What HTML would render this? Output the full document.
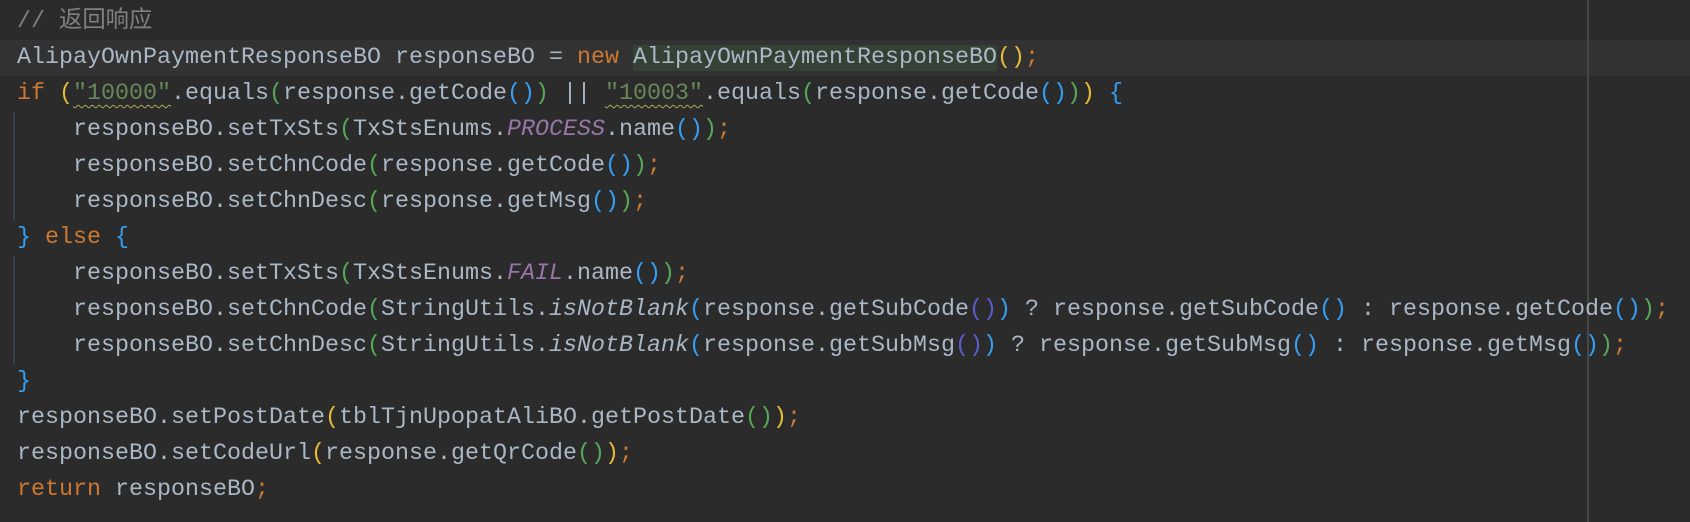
<!DOCTYPE html>
<html><head><meta charset="utf-8"><style>
html,body{margin:0;padding:0;}
body{width:1690px;height:522px;background:#2b2b2b;position:relative;overflow:hidden;
font-family:"Liberation Mono","Noto Sans CJK SC",monospace;font-size:23.33px;color:#a9b7c6;}
.l{position:absolute;left:17px;height:36px;line-height:36px;white-space:pre;}
.hl{position:absolute;left:0;width:1690px;top:40px;height:36px;background:#323232;}
.vg{position:absolute;left:1587px;top:0;width:2px;height:522px;background:#474747;}
.ig{position:absolute;left:13px;width:2px;background:#34414d;}
.k{color:#cc7832}.s{color:#6a8759;text-decoration:underline wavy #a9a95a;text-underline-offset:5px;text-decoration-thickness:1px}
.c{color:#808080}.p{color:#9876aa;font-style:italic}.i{font-style:italic}
.y{color:#e8ba36}.g{color:#54a857}.b{color:#359ff4}.n{color:#5c5ccc}
.gh{background:#344134}
</style></head><body>
<div class="hl"></div>
<div class="vg"></div>
<div class="ig" style="top:112px;height:108px"></div>
<div class="ig" style="top:256px;height:108px"></div>
<div class="l c" style="top:4px">// 返回响应</div>
<div class="l" style="top:40px">AlipayOwnPaymentResponseBO responseBO = <span class="k">new</span> <span class="gh">AlipayOwnPaymentResponseBO</span><span class="y">()</span><span class="k">;</span></div>
<div class="l" style="top:76px"><span class="k">if</span> <span class="y">(</span><span class="s">"10000"</span>.equals<span class="g">(</span>response.getCode<span class="b">()</span><span class="g">)</span> || <span class="s">"10003"</span>.equals<span class="g">(</span>response.getCode<span class="b">()</span><span class="g">)</span><span class="y">)</span> <span class="b">{</span></div>
<div class="l" style="top:112px">    responseBO.setTxSts<span class="g">(</span>TxStsEnums.<span class="p">PROCESS</span>.name<span class="b">()</span><span class="g">)</span><span class="k">;</span></div>
<div class="l" style="top:148px">    responseBO.setChnCode<span class="g">(</span>response.getCode<span class="b">()</span><span class="g">)</span><span class="k">;</span></div>
<div class="l" style="top:184px">    responseBO.setChnDesc<span class="g">(</span>response.getMsg<span class="b">()</span><span class="g">)</span><span class="k">;</span></div>
<div class="l" style="top:220px"><span class="b">}</span> <span class="k">else</span> <span class="b">{</span></div>
<div class="l" style="top:256px">    responseBO.setTxSts<span class="g">(</span>TxStsEnums.<span class="p">FAIL</span>.name<span class="b">()</span><span class="g">)</span><span class="k">;</span></div>
<div class="l" style="top:292px">    responseBO.setChnCode<span class="g">(</span>StringUtils.<span class="i">isNotBlank</span><span class="b">(</span>response.getSubCode<span class="n">()</span><span class="b">)</span> ? response.getSubCode<span class="b">()</span> : response.getCode<span class="b">()</span><span class="g">)</span><span class="k">;</span></div>
<div class="l" style="top:328px">    responseBO.setChnDesc<span class="g">(</span>StringUtils.<span class="i">isNotBlank</span><span class="b">(</span>response.getSubMsg<span class="n">()</span><span class="b">)</span> ? response.getSubMsg<span class="b">()</span> : response.getMsg<span class="b">()</span><span class="g">)</span><span class="k">;</span></div>
<div class="l" style="top:364px"><span class="b">}</span></div>
<div class="l" style="top:400px">responseBO.setPostDate<span class="y">(</span>tblTjnUpopatAliBO.getPostDate<span class="g">()</span><span class="y">)</span><span class="k">;</span></div>
<div class="l" style="top:436px">responseBO.setCodeUrl<span class="y">(</span>response.getQrCode<span class="g">()</span><span class="y">)</span><span class="k">;</span></div>
<div class="l" style="top:472px"><span class="k">return</span> responseBO<span class="k">;</span></div>
</body></html>
